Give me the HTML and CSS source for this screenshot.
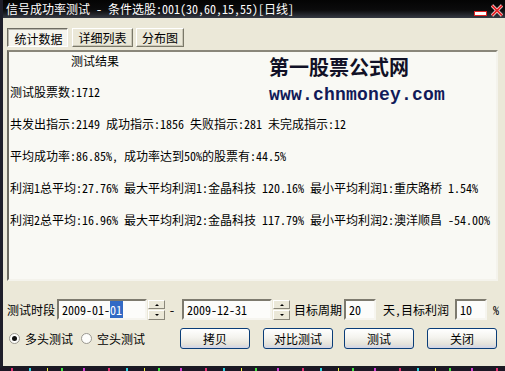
FILE: index.html
```html
<!DOCTYPE html>
<html lang="zh-CN">
<head>
  <meta charset="UTF-8" />
  <title>信号成功率测试</title>
  <link rel="stylesheet" href="styles.css">
</head>
<body>

  <div class="window">
    <div class="titlebar">
      <span class="title">信号成功率测试 - 条件选股:001(30,60,15,55)[日线]</span>
      <div class="title-btns">
        <svg class="min-btn" width="13" height="5" viewBox="0 0 13 5">
          <rect x="0.5" y="0.5" width="12" height="4" fill="#fff" stroke="#e02424" />
        </svg>
        <svg class="close-btn" width="12" height="13" viewBox="0 0 12 13">
          <path d="M1 1.5 L11 11.5 M11 1.5 L1 11.5" stroke="#fff" stroke-width="3.2" />
          <path d="M1 1.5 L11 11.5 M11 1.5 L1 11.5" stroke="#e3262a" stroke-width="2" />
        </svg>
      </div>
    </div>

    <div class="tabs">
      <div class="tab active">统计数据</div>
      <div class="tab">详细列表</div>
      <div class="tab small">分布图</div>
    </div>

    <div class="panel">
      <div class="logo">
        <div class="logo-cn">第一股票公式网</div>
        <div class="logo-url">www.chnmoney.com</div>
      </div>
      <div class="result-title">测试结果</div>
      <p class="row">测试股票数:1712</p>
      <p class="row">共发出指示:2149 成功指示:1856 失败指示:281 未完成指示:12</p>
      <p class="row">平均成功率:86.85%, 成功率达到50%的股票有:44.5%</p>
      <p class="row">利润1总平均:27.76% 最大平均利润1:金晶科技 120.16% 最小平均利润1:重庆路桥 1.54%</p>
      <p class="row">利润2总平均:16.96% 最大平均利润2:金晶科技 117.79% 最小平均利润2:澳洋顺昌 -54.00%</p>
    </div>

    <div class="controls">
      <div class="ctl-row">
        <span class="lbl">测试时段</span>
        <div class="field date">2009-01-<span class="sel">01</span></div>
        <div class="spin"><span class="up"></span><span class="down"></span></div>
        <span class="dash">-</span>
        <div class="field date">2009-12-31</div>
        <div class="spin"><span class="up"></span><span class="down"></span></div>
        <span class="lbl period">目标周期</span>
        <div class="field num">20</div>
        <span class="lbl days">天,目标利润</span>
        <div class="field num">10</div>
        <span class="lbl pct">%</span>
      </div>

      <div class="ctl-row">
        <span class="radio checked"></span>
        <span class="lbl radio-lbl">多头测试</span>
        <span class="radio"></span>
        <span class="lbl radio-lbl">空头测试</span>
        <button class="btn first">拷贝</button>
        <button class="btn">对比测试</button>
        <button class="btn mid">测试</button>
        <button class="btn">关闭</button>
      </div>
    </div>
  </div>
  <div class="noise"></div>

</body>
</html>
```

FILE: styles.css
```css
body {
  margin: 0;
  width: 505px;
  height: 371px;
  overflow: hidden;
  background: #ece9d8;
}
.window {
  width: 505px;
  height: 368px;
  box-sizing: border-box;
  background: #ebe8d8;
  border-left: 3px solid #1e1e2a;
  border-bottom: 2px solid #1a1a22;
  font-family: "Noto Sans Mono CJK SC", "Noto Sans CJK SC", "DejaVu Sans Mono", monospace;
  font-size: 12px;
  font-feature-settings: "hwid";
  color: #000;
}
.titlebar {
  height: 18px;
  background: linear-gradient(#040404 0, #0b0b0c 55%, #363a44 100%);
  color: #fff;
  display: flex;
  align-items: center;
  justify-content: space-between;
  padding-left: 3px;
}
.title {
  line-height: 18px;
  white-space: pre;
}
.title-btns {
  display: flex;
  align-items: flex-end;
  gap: 4px;
  padding-right: 2px;
  height: 16px;
}
.min-btn {
  margin-bottom: 1px;
}

.tabs {
  display: flex;
  gap: 4px;
  margin: 10px 0 3px 4px;
}
.tab {
  width: 61px;
  height: 19px;
  box-sizing: border-box;
  line-height: 17px;
  text-align: center;
  border: 1px solid;
  border-color: #fff #7a7868 #7a7868 #fff;
  box-shadow: inset -1px -1px 0 #c9c6b6;
  background: #ebe8d8;
}
.tab.active {
  border-color: #6e6c62 #fff #fff #6e6c62;
  box-shadow: inset 1px 1px 0 #b8b6ac;
  background: #f6f5ee;
  padding: 1px 0 0 2px;
}
.tab.small {
  width: 48px;
  margin-left: -1px;
}

.panel {
  position: relative;
  margin-left: 4px;
  width: 491px;
  height: 231px;
  box-sizing: border-box;
  border: 2px solid;
  border-color: #8a877a #f4f3ec #f4f3ec #6b6960;
  background: #f9f9f4;
  padding: 2px 0 0 1px;
}
.result-title {
  line-height: 14px;
  padding-left: 61px;
}
.row {
  margin: 0;
  line-height: 32px;
  white-space: pre;
}
.result-title + .row {
  margin-top: 8px;
}
.logo {
  position: absolute;
  left: 260px;
  top: 4px;
}
.logo-cn {
  font-family: "Noto Sans CJK SC", sans-serif;
  font-weight: 700;
  font-size: 20px;
  line-height: 22px;
  color: #111126;
}
.logo-url {
  font-family: "Liberation Mono", monospace;
  font-weight: 700;
  font-size: 18px;
  line-height: 20px;
  letter-spacing: 0.2px;
  margin-top: 7px;
  color: #111a58;
}

.controls {
  padding-left: 4px;
}
.ctl-row {
  display: flex;
  align-items: center;
  height: 21px;
  margin-top: 18px;
}
.ctl-row + .ctl-row {
  margin-top: 8px;
}
.ctl-row > * {
  flex-shrink: 0;
  white-space: pre;
}
.field {
  height: 21px;
  box-sizing: border-box;
  border: 2px solid;
  border-color: #7d7a6e #f6f5ef #f6f5ef #7d7a6e;
  background: #fcfcfa;
  padding-left: 3px;
  line-height: 17px;
}
.field.date {
  width: 90px;
  margin-left: 2px;
}
.field.num {
  width: 32px;
}
.sel {
  background: #316ac5;
  color: #fff;
  padding: 0 1px 0 0;
}
.spin {
  width: 17px;
  height: 20px;
  margin-left: 1px;
  display: flex;
  flex-direction: column;
  gap: 1px;
}
.spin span {
  flex: 1;
  position: relative;
  background: #ebe8d8;
  border: 1px solid;
  border-color: #fff #8a877a #8a877a #fff;
}
.spin span::after {
  content: "";
  position: absolute;
  left: 6px;
  top: 3px;
  border-left: 2px solid transparent;
  border-right: 2px solid transparent;
}
.spin .up::after {
  border-bottom: 2px solid #000;
}
.spin .down::after {
  border-top: 2px solid #000;
}
.dash {
  margin: 0 5px 0 4px;
}
.lbl.period {
  margin: 0 2px 0 4px;
}
.lbl.days {
  margin: 0 6px 0 7px;
}
.lbl.pct {
  margin-left: 6px;
}

.radio {
  width: 11px;
  height: 11px;
  box-sizing: border-box;
  border-radius: 50%;
  border: 1px solid #9a9890;
  background: #fdfdfb;
  margin-left: 2px;
  position: relative;
}
.radio.checked::after {
  content: "";
  position: absolute;
  left: 2px;
  top: 2px;
  width: 5px;
  height: 5px;
  border-radius: 50%;
  background: #111;
}
.radio-lbl {
  margin: 0 8px 0 5px;
}
.radio-lbl + .radio {
  margin-left: 0;
}
.btn {
  width: 70px;
  height: 21px;
  margin-left: 13px;
  border: 1px solid #0a3d78;
  border-radius: 3px;
  background: linear-gradient(#ffffff 0, #f4f3ee 45%, #e4e2da 80%, #cfd3e6 100%);
  font: inherit;
  color: #000;
  padding: 0;
}
.btn.first {
  margin-left: 27px;
}
.btn.mid {
  margin-left: 11px;
}

.noise {
  height: 3px;
  background: #1c1624 repeating-linear-gradient(90deg, transparent 0 11px, #e03070 11px 13px, transparent 13px 29px, #30d0e0 29px 31px, transparent 31px 47px, #f0f040 47px 48px, transparent 48px 61px, #40e040 61px 63px, transparent 63px 83px, #d040d0 83px 85px, transparent 85px 97px);
}
```
